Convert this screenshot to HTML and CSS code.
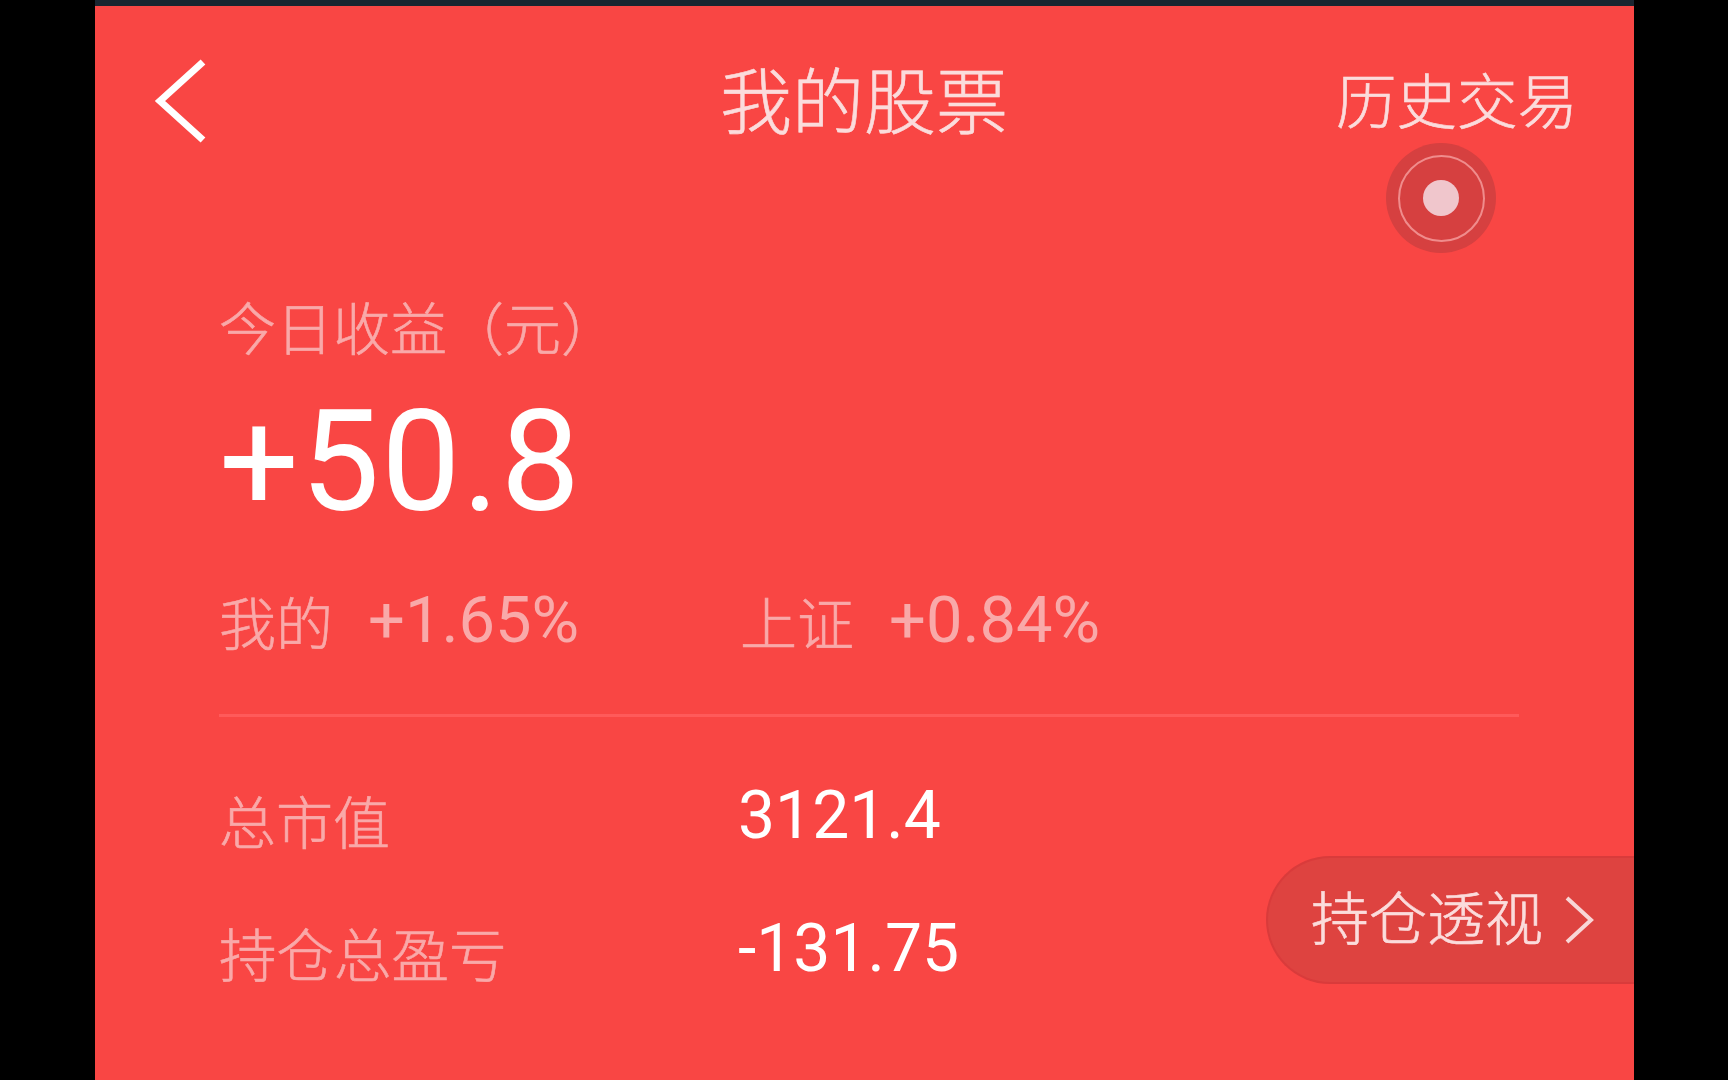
FILE: index.html
```html
<!DOCTYPE html>
<html lang="zh-CN">
<head>
<meta charset="utf-8">
<title>我的股票</title>
<link rel="stylesheet" href="styles.css">
</head>
<body>
<div class="frame">
  <div class="status-strip"></div>
  <main class="screen">
    <header class="nav">
      <svg class="back" viewBox="0 0 52 84" aria-hidden="true"><path d="M49 3 6 42l43 39"/></svg>
      <h1 class="title">我的股票</h1>
      <a class="history">历史交易</a>
    </header>
    <div class="touch-dot"><span class="touch-ring"><span class="touch-core"></span></span></div>
    <section class="summary">
      <div class="today-label">今日收益（元）</div>
      <div class="today-amount">+50.8</div>
      <div class="compare">
        <div class="compare-item"><span class="compare-name">我的</span><span class="compare-value">+1.65%</span></div>
        <div class="compare-item"><span class="compare-name">上证</span><span class="compare-value">+0.84%</span></div>
      </div>
      <div class="divider"></div>
      <div class="stat-row">
        <span class="stat-label">总市值</span>
        <span class="stat-value">3121.4</span>
      </div>
      <div class="stat-row stat-row-second">
        <span class="stat-label">持仓总盈亏</span>
        <span class="stat-value">-131.75</span>
      </div>
    </section>
    <a class="perspective">
      <span class="perspective-text">持仓透视</span>
      <svg class="perspective-arrow" viewBox="0 0 32 48" aria-hidden="true"><path d="M3 2l24 22L3 46"/></svg>
    </a>
  </main>
</div>
</body>
</html>
```
FILE: styles.css
```css
html, body {
  margin: 0;
  padding: 0;
  background: #000;
}
body {
  font-family: Roboto, "Noto Sans CJK SC", sans-serif;
  color: #fff;
}
.frame {
  width: 1539px;
  height: 1080px;
  margin-left: 95px;
  overflow: hidden;
}
.status-strip {
  height: 6px;
  background: #1a2530;
}
.screen {
  position: relative;
  height: 1074px;
  background: #f94644;
  filter: blur(0.7px);
}
.nav {
  display: flex;
  align-items: center;
  height: 190px;
  padding: 0 56px 0 59px;
  position: relative;
}
.back {
  width: 52px;
  height: 84px;
  fill: none;
  stroke: #fff;
  stroke-width: 7;
}
.title {
  position: absolute;
  left: 625px;
  top: 60px;
  margin: 0;
  font-size: 72px;
  line-height: 76px;
  font-weight: 300;
  -webkit-text-stroke: 0.6px #fbdcdc;
  color: #fbdcdc;
}
.history {
  margin-left: auto;
  margin-top: 6px;
  font-size: 60.5px;
  line-height: 70px;
  font-weight: 300;
  -webkit-text-stroke: 0.6px #fbdcdc;
  color: #fbdcdc;
}
.touch-dot {
  position: absolute;
  left: 1291px;
  top: 137px;
  width: 110px;
  height: 110px;
  border-radius: 50%;
  background: #d64040;
  display: flex;
  align-items: center;
  justify-content: center;
}
.touch-ring {
  box-sizing: border-box;
  width: 87px;
  height: 87px;
  border: 2px solid #f08c8c;
  border-radius: 50%;
  display: flex;
  align-items: center;
  justify-content: center;
}
.touch-core {
  width: 36px;
  height: 36px;
  border-radius: 50%;
  background: #f0c6cc;
}
.summary {
  padding: 100px 0 0 124px;
}
.today-label {
  font-size: 57px;
  line-height: 70px;
  font-weight: 300;
  -webkit-text-stroke: 0.6px #f9a9a9;
  color: #f9a9a9;
}
.today-amount {
  margin-top: 21px;
  font-size: 141px;
  line-height: 149px;
  letter-spacing: 1.5px;
  color: #fff;
}
.compare {
  display: grid;
  grid-template-columns: 521px 1fr;
  margin-top: 49px;
}
.compare-item {
  display: flex;
  align-items: center;
  height: 70px;
  color: #f9a9a9;
}
.compare-name {
  width: 149px;
  font-size: 57px;
  font-weight: 300;
  -webkit-text-stroke: 0.6px #f9a9a9;
}
.compare-value {
  font-size: 65px;
}
.divider {
  width: 1300px;
  height: 3px;
  margin-top: 59px;
  background: #ff5a5a;
}
.stat-row {
  display: grid;
  grid-template-columns: 521px 1fr;
  margin-top: 73px;
  height: 70px;
}
.stat-row-second {
  margin-top: 63px;
}
.stat-label {
  font-size: 57px;
  line-height: 70px;
  font-weight: 300;
  -webkit-text-stroke: 0.6px #f9a9a9;
  color: #f9a9a9;
}
.stat-row-second .stat-label {
  font-size: 57.5px;
}
.stat-value {
  margin-left: -2px;
  font-size: 66px;
  line-height: 52px;
  color: #fff;
}
.perspective {
  position: absolute;
  right: 0;
  top: 850px;
  box-sizing: border-box;
  width: 368px;
  height: 128px;
  padding-left: 43px;
  display: flex;
  align-items: center;
  border: solid #d93b3b;
  border-width: 2px 0 2px 2px;
  border-radius: 64px 0 0 64px;
  background: #de4340;
}
.perspective-text {
  font-size: 58px;
  line-height: 70px;
  font-weight: 300;
  -webkit-text-stroke: 0.6px #fbdcdc;
  color: #fbdcdc;
}
.perspective-arrow {
  width: 32px;
  height: 48px;
  margin-left: 21px;
  fill: none;
  stroke: #f8d6d6;
  stroke-width: 4;
}
```
